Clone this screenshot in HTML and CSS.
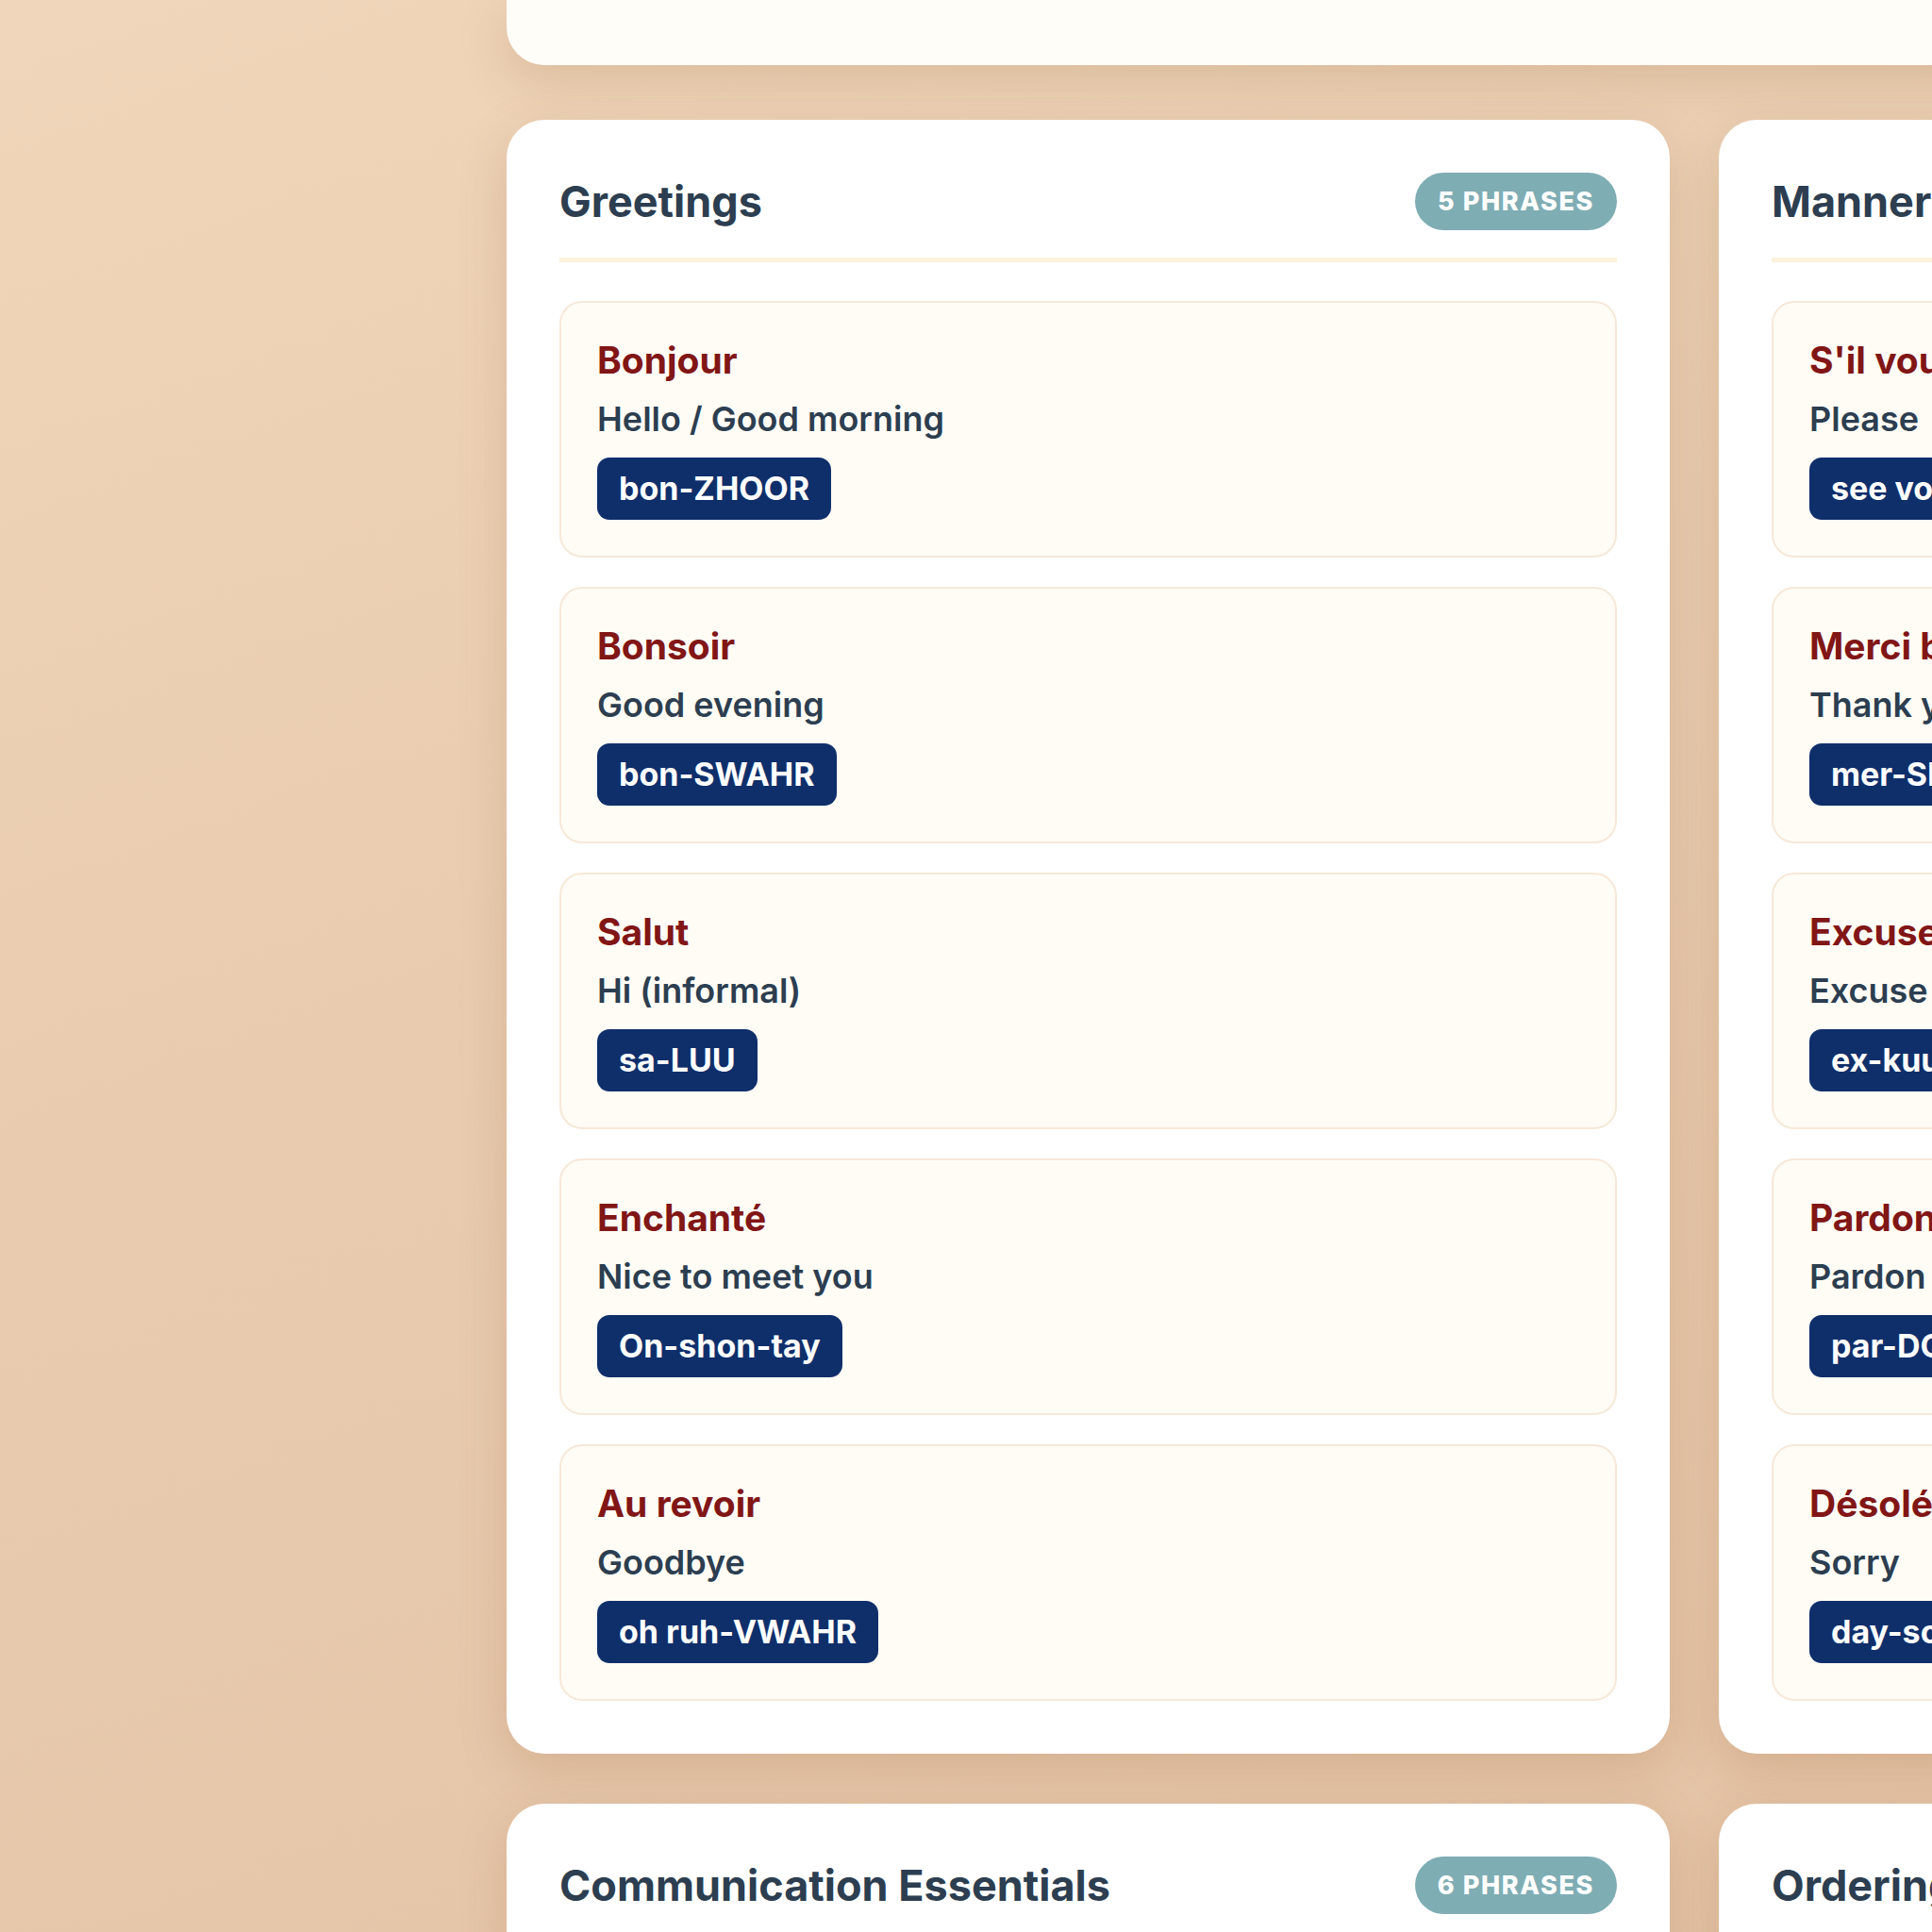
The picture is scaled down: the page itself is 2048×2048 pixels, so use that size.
FILE: index.html
```html
<!DOCTYPE html>
<html>
<head>
<meta charset="UTF-8">
<title>French Phrasebook</title>
<link rel="stylesheet" href="styles.css">
</head>
<body>
<div class="page">
  <div class="hero"></div>

  <div class="topics">
    <section class="topic">
      <div class="topic-head">
        <h2>Greetings</h2>
        <span class="count">5 phrases</span>
      </div>
      <div class="phrases">
        <div class="phrase">
          <div class="fr">Bonjour</div>
          <div class="en">Hello / Good morning</div>
          <span class="say">bon-ZHOOR</span>
        </div>
        <div class="phrase">
          <div class="fr">Bonsoir</div>
          <div class="en">Good evening</div>
          <span class="say">bon-SWAHR</span>
        </div>
        <div class="phrase">
          <div class="fr">Salut</div>
          <div class="en">Hi (informal)</div>
          <span class="say">sa-LUU</span>
        </div>
        <div class="phrase">
          <div class="fr">Enchanté</div>
          <div class="en">Nice to meet you</div>
          <span class="say">On-shon-tay</span>
        </div>
        <div class="phrase">
          <div class="fr">Au revoir</div>
          <div class="en">Goodbye</div>
          <span class="say">oh ruh-VWAHR</span>
        </div>
      </div>
    </section>

    <section class="topic">
      <div class="topic-head">
        <h2>Manners</h2>
        <span class="count">5 phrases</span>
      </div>
      <div class="phrases">
        <div class="phrase">
          <div class="fr">S'il vous plaît</div>
          <div class="en">Please</div>
          <span class="say">see voo PLAY</span>
        </div>
        <div class="phrase">
          <div class="fr">Merci beaucoup</div>
          <div class="en">Thank you very much</div>
          <span class="say">mer-SEE boh-KOO</span>
        </div>
        <div class="phrase">
          <div class="fr">Excusez-moi</div>
          <div class="en">Excuse me</div>
          <span class="say">ex-kuu-zay MWAH</span>
        </div>
        <div class="phrase">
          <div class="fr">Pardon</div>
          <div class="en">Pardon me</div>
          <span class="say">par-DOHN</span>
        </div>
        <div class="phrase">
          <div class="fr">Désolé(e)</div>
          <div class="en">Sorry</div>
          <span class="say">day-so-LAY</span>
        </div>
      </div>
    </section>

    <section class="topic">
      <div class="topic-head">
        <h2>Communication Essentials</h2>
        <span class="count">6 phrases</span>
      </div>
    </section>

    <section class="topic">
      <div class="topic-head">
        <h2>Ordering Food</h2>
        <span class="count">6 phrases</span>
      </div>
    </section>
  </div>
</div>
</body>
</html>
```

FILE: styles.css
```css
html, body {
    margin: 0;
    height: 2048px;
    overflow: hidden;
}
body {
    background: linear-gradient(160deg, #f0d6ba 0%, #e9ccb0 45%, #e4c3a5 100%);
    font-family: Inter, "Noto Sans", sans-serif;
    color: #2c3e50;
}
.page {
    width: 2518px;
    padding-left: 537px;
}
.hero {
    height: 69px;
    background-color: #fffdf8;
    border-radius: 0 0 40px 40px;
    box-shadow: 0 16px 50px rgba(150, 100, 60, 0.22);
}
.topics {
    display: grid;
    grid-template-columns: 1233px 1233px;
    gap: 53px 52px;
    margin-top: 58px;
}
.topic {
    background-color: #ffffff;
    border-radius: 40px;
    padding: 56px;
    box-shadow: 0 16px 50px rgba(150, 100, 60, 0.22);
}
.topic-head {
    display: flex;
    justify-content: space-between;
    align-items: center;
    padding-bottom: 29px;
    border-bottom: 5px solid #fdf3da;
    margin-bottom: 41px;
}
.topic-head h2 {
    margin: 0;
    font-size: 45px;
    line-height: 56px;
    font-weight: 700;
    color: #2c3e50;
    white-space: nowrap;
}
.count {
    height: 61px;
    line-height: 61px;
    padding: 0 24px;
    border-radius: 31px;
    background-color: #7fadb4;
    color: #ffffff;
    font-size: 27px;
    font-weight: 800;
    letter-spacing: 1.6px;
    text-transform: uppercase;
}
.phrases {
    display: flex;
    flex-direction: column;
    gap: 31px;
}
.phrase {
    background-color: #fffcf6;
    border: 2px solid #f7e8d8;
    border-radius: 24px;
    padding: 38px;
    display: flex;
    flex-direction: column;
    align-items: flex-start;
}
.fr {
    font-size: 39px;
    line-height: 45px;
    font-weight: 700;
    color: #811616;
    white-space: nowrap;
}
.en {
    margin-top: 20px;
    font-size: 36px;
    line-height: 40px;
    font-weight: 600;
    color: #2c3e50;
    white-space: nowrap;
}
.say {
    margin-top: 21px;
    height: 66px;
    line-height: 66px;
    padding: 0 23px;
    border-radius: 13px;
    background-color: #0f2f6b;
    color: #ffffff;
    font-size: 34px;
    font-weight: 700;
    white-space: nowrap;
}
```
